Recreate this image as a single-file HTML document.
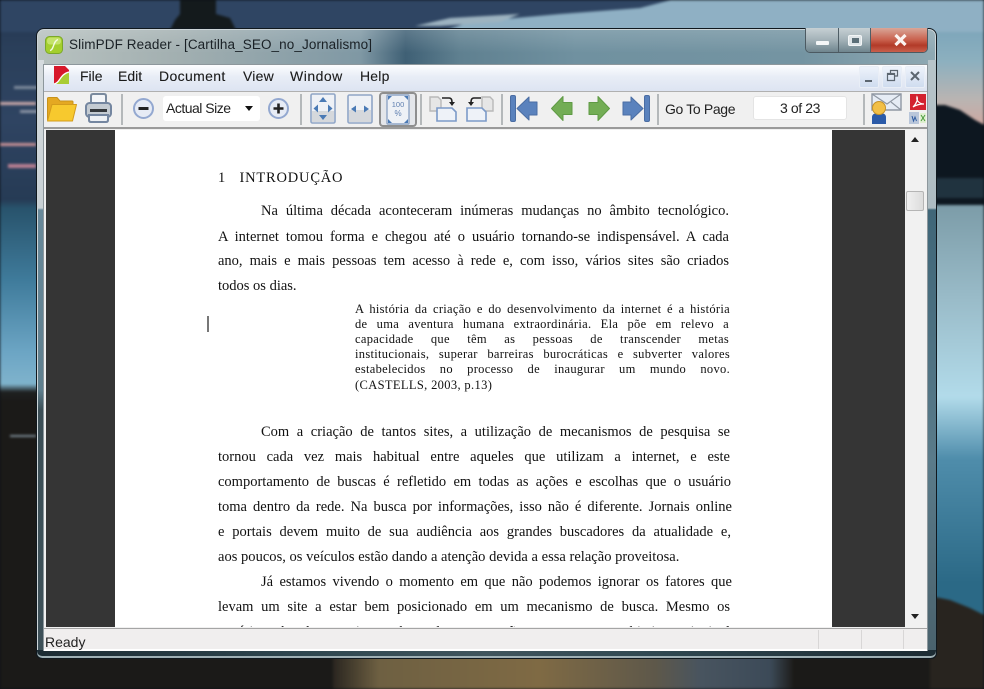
<!DOCTYPE html>
<html><head><meta charset="utf-8"><style>
html,body{margin:0;padding:0;width:984px;height:689px;overflow:hidden;background:#0c1118}
*{box-sizing:border-box}
.a{position:absolute}
#bg{position:absolute;left:0;top:0;filter:blur(1.2px)}
#win{position:absolute;left:36px;top:28px;width:901px;height:631px;border-radius:8px 8px 6px 6px;border:1px solid #10181e;
background:linear-gradient(rgba(255,255,255,.16),rgba(255,255,255,0) 24px),linear-gradient(90deg,#b8c2c0 0,#a3b0b1 15%,#7f98a4 36%,#3f6075 41%,#5f8090 47%,#7091a0 60%,#7494a2 85%,#8fa9b3 100%);box-shadow:inset 0 0 0 1px #cdd5d8}
#foot{position:absolute;left:36px;top:650px;width:901px;height:9px;border-radius:0 0 6px 6px;background:linear-gradient(90deg,#1c2b33,#2f4750 30%,#40555d 50%,#2f4750 70%,#1c2b33),#24333c;border:1px solid #10181e;border-top:0;box-shadow:inset 0 -2px 0 #9fb0b5}
#title{left:69px;top:37px;font:13.5px "Liberation Sans",sans-serif;color:#1a2126;letter-spacing:.1px;white-space:nowrap}
#client{left:43px;top:64px;width:885px;height:587px;background:#f0f0f0;overflow:hidden;border:1px solid #8d979c}
#menu{left:44px;top:65px;width:883px;height:26px;background:linear-gradient(#fcfdff,#e8edf6 45%,#dde4f2)}
.m{position:absolute;top:67px;font:14px/18px "Liberation Sans",sans-serif;color:#1a1a1a;white-space:nowrap;-webkit-text-stroke:.1px #222}
#tb{left:44px;top:91px;width:883px;height:38px;background:#f0f0f0;border-top:1px solid #b0b0b0;border-bottom:2px solid #9a9a9a}
.sep{position:absolute;top:94px;width:2px;height:31px;background:#b4b8ba}
#box1{left:163px;top:96px;width:97px;height:25px;background:#fff;border-radius:3px}
#box2{left:753px;top:96px;width:94px;height:24px;background:#fff;border:1px solid #e4e4e4;border-radius:3px;text-align:center;font:14px/23px "Liberation Sans",sans-serif;color:#222;letter-spacing:-.4px}
#as{left:166px;top:99px;font:14px/18px "Liberation Sans",sans-serif;color:#222;letter-spacing:-.5px;white-space:nowrap}
#gp{left:665px;top:100px;font:14px/18px "Liberation Sans",sans-serif;color:#222;letter-spacing:-.35px;white-space:nowrap}
#dark{left:46px;top:130px;width:859px;height:497px;background:#353535}
#page{left:115px;top:130px;width:717px;height:497px;background:#fff;overflow:hidden}
.l{position:absolute;font:14.5px/20px "Liberation Serif",serif;color:#111;white-space:nowrap;text-align:justify;text-align-last:justify;filter:blur(.25px)}
.q{font-size:12.5px;line-height:16px;letter-spacing:.3px}
#scroll{left:905px;top:130px;width:20px;height:497px;background:#f1f1f1}
#thumb{left:906px;top:191px;width:18px;height:20px;background:linear-gradient(90deg,#f0f0f0,#dcdcdc);border:1px solid #b5b5b5;border-radius:2px}
#sb{left:44px;top:628px;width:883px;height:23px;background:#f0eeee;border-top:1px solid #a5a5a5;border-bottom:2px solid #fff}
#ready{left:45px;top:633px;font:14px/18px "Liberation Sans",sans-serif;color:#222}
.sd{position:absolute;top:630px;width:1px;height:19px;background:#d8d6d6}
.wb{position:absolute;top:66px;width:20px;height:22px;background:linear-gradient(#eef3fb,#cfdcef);border:1px solid #e9eef6;border-radius:2px}
#ctl{left:805px;top:28px;width:123px;height:25px;border-radius:0 0 5px 5px;border:1px solid #4c5a62;border-top:0;overflow:hidden;display:flex}
#ctl div{height:100%}
</style></head><body>
<svg id="bg" width="984" height="689" viewBox="0 0 984 689">
<defs>
<linearGradient id="sky" gradientUnits="userSpaceOnUse" x1="0" y1="0" x2="0" y2="400"><stop offset="0" stop-color="#24344f"/><stop offset=".12" stop-color="#2a3f5a"/><stop offset=".3" stop-color="#2f4462"/><stop offset=".5" stop-color="#263b55"/><stop offset=".52" stop-color="#28536c"/><stop offset=".7" stop-color="#3f7b9b"/><stop offset=".88" stop-color="#6ca5c4"/><stop offset=".96" stop-color="#7fb3cc"/><stop offset=".98" stop-color="#1e2020"/><stop offset="1" stop-color="#1b1b1a"/></linearGradient>
<linearGradient id="skyr" gradientUnits="userSpaceOnUse" x1="0" y1="0" x2="0" y2="620"><stop offset="0" stop-color="#6f9db6"/><stop offset=".1" stop-color="#8db0bf"/><stop offset=".16" stop-color="#b9b4b2"/><stop offset=".2" stop-color="#cda9a2"/><stop offset=".29" stop-color="#24384a"/><stop offset=".32" stop-color="#7a9aa6"/><stop offset=".48" stop-color="#99bbc8"/><stop offset=".64" stop-color="#b2dbea"/><stop offset=".74" stop-color="#4f8dab"/><stop offset=".94" stop-color="#2b6986"/><stop offset="1" stop-color="#2b6986"/></linearGradient>
<linearGradient id="tan" x1="0" y1="0" x2="1" y2="0"><stop offset="0" stop-color="#2a2620"/><stop offset=".1" stop-color="#6e6042"/><stop offset=".45" stop-color="#7f6a44"/><stop offset=".7" stop-color="#5e584a"/><stop offset=".8" stop-color="#48545f"/><stop offset=".95" stop-color="#3c4a58"/><stop offset="1" stop-color="#1e1e1c"/></linearGradient>
</defs>
<rect width="984" height="689" fill="#1b1a18"/>
<rect x="-5" y="0" width="60" height="400" fill="url(#sky)"/>
<rect x="930" y="0" width="60" height="625" fill="url(#skyr)"/>
<rect x="0" y="0" width="984" height="32" fill="#8fb0c4"/>
<path d="M-5 -5H690L640 8 560 14 470 22 440 32H-5Z" fill="#2f4563"/>
<path d="M415 26L450 18 520 14 500 22 440 26Z" fill="#9db3c0"/>
<path d="M170 30L175 20 180 14V0H216V14L230 18 236 30Z" fill="#141a1c"/>
<path d="M930 105H945L960 110 975 120 990 128V205H930Z" fill="#0d1720"/>
<rect x="930" y="178" width="60" height="20" fill="#20333f"/>
<path d="M930 596L950 600 970 608 990 618V700H930Z" fill="#28241f"/>
<rect x="0" y="102" width="36" height="3" fill="#c9a8a8"/>
<rect x="14" y="86" width="24" height="3" fill="#7d8a9c"/>
<rect x="20" y="110" width="18" height="3" fill="#8a93a4"/>
<rect x="0" y="143" width="36" height="3" fill="#c58f94"/>
<rect x="8" y="164" width="28" height="4" fill="#b97f92"/>
<rect x="10" y="435" width="26" height="2" fill="#7a8790"/>
<rect x="333" y="655" width="460" height="40" fill="url(#tan)"/>
</svg>

<div id="win"></div>
<div id="foot"></div>
<div class="a" style="left:38px;top:60px;width:6px;height:590px;background:linear-gradient(#d5dbde 0,#c8d0d4 148px,#68899a 150px,#5f7f8e 330px,#3c4f57 350px,#3d5058 100%)"></div>
<div class="a" style="left:928px;top:60px;width:8px;height:590px;background:linear-gradient(#b7c4c9 0,#aebcc2 148px,#3f6678 150px,#5a7b8a 400px,#4a626d 100%)"></div>

<!-- app icon -->
<svg class="a" style="left:45px;top:36px" width="18" height="18" viewBox="0 0 18 18"><rect x=".5" y=".5" width="17" height="17" rx="4" fill="#a4cf2e" stroke="#7ba82a"/><rect x="2" y="1.5" width="14" height="7" rx="3" fill="#c4e36a"/><path d="M5 14.5C9 14 8 5 13 3.5" stroke="#f4fbe4" stroke-width="1.4" fill="none"/></svg>
<div id="title" class="a">SlimPDF Reader - [Cartilha_SEO_no_Jornalismo]</div>

<!-- caption buttons -->
<div id="ctl" class="a">
<div style="width:33px;background:linear-gradient(#c6d0d4,#a2b1b7 50%,#6f858e);border-right:1px solid #4f5e66"></div>
<div style="width:32px;background:linear-gradient(#c6d0d4,#a2b1b7 50%,#6f858e);border-right:1px solid #4f5e66"></div>
<div style="flex:1;background:linear-gradient(#d9a698,#c9604c 50%,#b23a28 72%,#c9604c)"></div>
</div>
<div class="a" style="left:816px;top:41px;width:13px;height:4px;background:#f4f6f7;border-radius:1px"></div>
<div class="a" style="left:848px;top:35px;width:14px;height:11px;background:#dfe5e8;border:1px solid #f2f5f6;border-radius:2px"></div>
<div class="a" style="left:852px;top:38px;width:7px;height:5px;background:#5c6f78"></div>
<svg class="a" style="left:893px;top:33px" width="15" height="14" viewBox="0 0 15 14"><path d="M2.5 2L12.5 12M12.5 2L2.5 12" stroke="#fbf3f0" stroke-width="3.2"/></svg>

<div id="client" class="a"></div>
<div id="menu" class="a"></div>
<svg class="a" style="left:53px;top:65px" width="17" height="20" viewBox="0 0 17 20"><path d="M1 1H12L16 5V19H1Z" fill="#d7182a"/><path d="M1 19C7 18 7 9 16 7V19Z" fill="#a9cc34"/><path d="M1 19C7 18 7 9 16 7" stroke="#fff" stroke-width="1.3" fill="none"/></svg>
<div class="m" style="left:80px">File</div>
<div class="m" style="left:118px">Edit</div>
<div class="m" style="left:159px;letter-spacing:.35px">Document</div>
<div class="m" style="left:243px;letter-spacing:.2px">View</div>
<div class="m" style="left:290px;letter-spacing:.5px">Window</div>
<div class="m" style="left:360px;letter-spacing:.2px">Help</div>
<div class="wb" style="left:859px"></div><div class="wb" style="left:882px"></div><div class="wb" style="left:905px"></div>
<div class="a" style="left:865px;top:80px;width:7px;height:2px;background:#5c6670"></div>
<svg class="a" style="left:885px;top:69px" width="15" height="14" viewBox="0 0 15 14"><path d="M5.5 4V1.5H12.5V7H10M2.5 4.5H9.5V11.5H2.5Z" stroke="#5c6670" stroke-width="1.2" fill="none"/><path d="M2.5 5.5H9.5" stroke="#5c6670"/></svg>
<svg class="a" style="left:908px;top:69px" width="14" height="14" viewBox="0 0 14 14"><path d="M3 3L11 11M11 3L3 11" stroke="#5c6670" stroke-width="2"/></svg>

<div id="tb" class="a"></div>
<!-- open folder -->
<svg class="a" style="left:46px;top:95px" width="32" height="28" viewBox="0 0 32 28"><path d="M1.500 25V3.500Q1.500 2.500 3 2.500H11L14 6H26Q27 6 27 7V12H8Z" fill="#e4a822" stroke="#c8921a"/><path d="M1.500 26L6 9.500H30.500L26.500 26Z" fill="#f7c92e" stroke="#d49c1c" stroke-linejoin="round"/></svg>
<!-- print -->
<svg class="a" style="left:84px;top:92px" width="29" height="32" viewBox="0 0 29 32"><path d="M7 12V4Q7 2 9 2H20Q22 2 22 4V12" fill="#f3f5f8" stroke="#7a8a9e" stroke-width="2"/><rect x="2" y="11" width="25" height="14" rx="3.500" fill="#c4cbd2" stroke="#7486a0" stroke-width="2"/><rect x="6" y="17" width="17" height="3" fill="#34383c"/><path d="M5 23H24V28Q24 30 22 30H7Q5 30 5 28Z" fill="#eef1f5" stroke="#7486a0" stroke-width="2"/></svg>
<div class="sep" style="left:121px"></div>
<svg class="a" style="left:132px;top:97px" width="23" height="23" viewBox="0 0 23 23"><circle cx="11.500" cy="11.500" r="9.500" fill="#e6ebf5" stroke="#93a8d0" stroke-width="2"/><rect x="6.500" y="10" width="10" height="3" fill="#222"/></svg>
<div id="box1" class="a"></div>
<div id="as" class="a">Actual Size</div>
<div class="a" style="left:245px;top:106px;border:4px solid transparent;border-top:5px solid #111;border-bottom:0"></div>
<svg class="a" style="left:267px;top:97px" width="23" height="23" viewBox="0 0 23 23"><circle cx="11.500" cy="11.500" r="9.500" fill="#e6ebf5" stroke="#93a8d0" stroke-width="2"/><path d="M6.500 11.500H16.500M11.500 6.500V16.500" stroke="#222" stroke-width="2.600"/></svg>
<div class="sep" style="left:300px"></div>
<!-- fit page -->
<svg class="a" style="left:310px;top:93px" width="26" height="32" viewBox="0 0 26 32"><rect x="1" y="1" width="24" height="29" rx="1.500" fill="#eef1f6" stroke="#8fa5c6" stroke-width="1.600"/><path d="M2 18H24V29H2Z" fill="#d5d8dc"/><path d="M13 4L17 9H9ZM13 27L17 22H9ZM3.500 15.500L8 11.500V19.500ZM22.500 15.500L18 11.500V19.500Z" fill="#4a7ab5"/></svg>
<!-- fit width -->
<svg class="a" style="left:347px;top:94px" width="26" height="30" viewBox="0 0 26 30"><rect x="1" y="1" width="24" height="28" rx="1.500" fill="#eef1f6" stroke="#8fa5c6" stroke-width="1.600"/><path d="M2 16H24V28H2Z" fill="#d5d8dc"/><path d="M4 15L9 11.500V18.500ZM22 15L17 11.500V18.500Z" fill="#4a7ab5"/></svg>
<!-- 100% -->
<div class="a" style="left:379px;top:92px;width:38px;height:35px;border:2px solid #8e8e8e;border-radius:4px;background:#e4e6ea"></div>
<svg class="a" style="left:386px;top:94px" width="24" height="31" viewBox="0 0 24 31"><rect x="1" y="1" width="22" height="29" rx="1" fill="#eef1f6" stroke="#8fa5c6" stroke-width="1.400"/><path d="M2 6L6 2H2ZM22 6L18 2H22ZM2 25L6 29H2ZM22 25L18 29H22Z" fill="#4a7ab5"/><text x="12" y="13" text-anchor="middle" font-family="Liberation Sans" font-size="7.500" fill="#5f7fb0">100</text><text x="12" y="22" text-anchor="middle" font-family="Liberation Sans" font-size="8" fill="#5f7fb0">%</text></svg>
<div class="sep" style="left:420px"></div>
<!-- rotate -->
<svg class="a" style="left:428px;top:94px" width="30" height="29" viewBox="0 0 30 29"><path d="M2 3H10L13 6V17H2Z" fill="#e6e6e6" stroke="#b8b8b8" stroke-width="1.400"/><path d="M9 14H24L28 18V27H9Z" fill="#eef2f8" stroke="#7c9ac8" stroke-width="1.600"/><path d="M14 4H21C24 4 24 7 24 9" stroke="#222" stroke-width="1.600" fill="none"/><path d="M21 8H27L24 12Z" fill="#222"/></svg>
<svg class="a" style="left:465px;top:94px" width="30" height="29" viewBox="0 0 30 29"><path d="M17 3H25L28 6V17H17Z" fill="#e6e6e6" stroke="#b8b8b8" stroke-width="1.400"/><path d="M2 14H17L21 18V27H2Z" fill="#eef2f8" stroke="#7c9ac8" stroke-width="1.600"/><path d="M16 4H9C6 4 6 7 6 9" stroke="#222" stroke-width="1.600" fill="none"/><path d="M3 8H9L6 12Z" fill="#222"/></svg>
<div class="sep" style="left:501px"></div>
<!-- nav -->
<svg class="a" style="left:509px;top:94px" width="30" height="29" viewBox="0 0 30 29"><rect x="1.500" y="1.500" width="5" height="26" rx="1.500" fill="#5a82bd" stroke="#4a6da3"/><path d="M8 14.500L20 3V8H28V21H20V26Z" fill="#5a82bd" stroke="#4a6da3" stroke-linejoin="round"/></svg>
<svg class="a" style="left:550px;top:95px" width="24" height="27" viewBox="0 0 24 27"><path d="M1.500 13.500L13 1.500V7.500H22V19.500H13V25.500Z" fill="#73ad55" stroke="#5f9a45" stroke-linejoin="round"/></svg>
<svg class="a" style="left:587px;top:95px" width="24" height="27" viewBox="0 0 24 27"><path d="M22.500 13.500L11 1.500V7.500H2V19.500H11V25.500Z" fill="#73ad55" stroke="#5f9a45" stroke-linejoin="round"/></svg>
<svg class="a" style="left:621px;top:94px" width="30" height="29" viewBox="0 0 30 29"><rect x="23.500" y="1.500" width="5" height="26" rx="1.500" fill="#5a82bd" stroke="#4a6da3"/><path d="M22 14.500L10 3V8H2V21H10V26Z" fill="#5a82bd" stroke="#4a6da3" stroke-linejoin="round"/></svg>
<div class="sep" style="left:657px"></div>
<div id="gp" class="a">Go To Page</div>
<div id="box2" class="a">3 of 23</div>
<div class="sep" style="left:863px"></div>
<!-- mail -->
<svg class="a" style="left:871px;top:93px" width="32" height="31" viewBox="0 0 32 31"><path d="M1 1H30V17H1Z" fill="#e6ecf5" stroke="#8f97a3" stroke-width="1.400"/><path d="M1 1L16 11L30 1M30 17L20 9" stroke="#8f97a3" stroke-width="1.200" fill="none"/><path d="M1 31V24C1 21 4 20 8 20C12 20 15 21 15 24V31Z" fill="#2a5aa8"/><circle cx="8" cy="15" r="6.500" fill="#f2bf46" stroke="#c4922a"/></svg>
<!-- pdf -->
<svg class="a" style="left:909px;top:93px" width="17" height="31" viewBox="0 0 17 31"><rect x="1" y="1" width="16" height="16" fill="#d3222e"/><path d="M4 14C8 10 9 6 8 4C7 7 10 11 15 11C11 11 7 12 4 14Z" fill="none" stroke="#fff" stroke-width="1.200"/><rect x="0" y="19" width="10" height="12" fill="#b9c6da"/><path d="M3 23L4.500 28L6 24L7.500 28" stroke="#2d5aa0" fill="none"/><rect x="11" y="20" width="6" height="10" fill="#dff0d0"/><path d="M12 22L16 28M16 22L12 28" stroke="#4a9a3c"/></svg>

<div id="dark" class="a"></div>
<div id="page" class="a">
<div class="l" style="left:103px;top:38px;text-align-last:left;word-spacing:9px;letter-spacing:.8px">1 INTRODUÇÃO</div>
<div class="l" style="left:146px;top:71px;width:468px">Na última década aconteceram inúmeras mudanças no âmbito tecnológico.</div>
<div class="l" style="left:103px;top:97px;width:511px">A internet tomou forma e chegou até o usuário tornando-se indispensável. A cada</div>
<div class="l" style="left:103px;top:121px;width:511px">ano, mais e mais pessoas tem acesso à rede e, com isso, vários sites são criados</div>
<div class="l" style="left:103px;top:146px;text-align-last:left">todos os dias.</div>
<div class="l q" style="left:240px;top:171px;width:375px">A história da criação e do desenvolvimento da internet é a história</div>
<div class="l q" style="left:240px;top:186px;width:374px">de uma aventura humana extraordinária. Ela põe em relevo a</div>
<div class="l q" style="left:240px;top:201px;width:374px">capacidade que têm as pessoas de transcender metas</div>
<div class="l q" style="left:240px;top:216px;width:375px">institucionais, superar barreiras burocráticas e subverter valores</div>
<div class="l q" style="left:240px;top:231px;width:375px">estabelecidos no processo de inaugurar um mundo novo.</div>
<div class="l q" style="left:240px;top:247px;text-align-last:left;letter-spacing:.35px">(CASTELLS, 2003, p.13)</div>
<div class="l" style="left:146px;top:292px;width:469px">Com a criação de tantos sites, a utilização de mecanismos de pesquisa se</div>
<div class="l" style="left:103px;top:317px;width:512px">tornou cada vez mais habitual entre aqueles que utilizam a internet, e este</div>
<div class="l" style="left:103px;top:342px;width:513px">comportamento de buscas é refletido em todas as ações e escolhas que o usuário</div>
<div class="l" style="left:103px;top:367px;width:514px">toma dentro da rede. Na busca por informações, isso não é diferente. Jornais online</div>
<div class="l" style="left:103px;top:392px;width:513px">e portais devem muito de sua audiência aos grandes buscadores da atualidade e,</div>
<div class="l" style="left:103px;top:417px;text-align-last:left;letter-spacing:.02px">aos poucos, os veículos estão dando a atenção devida a essa relação proveitosa.</div>
<div class="l" style="left:146px;top:442px;width:471px">Já estamos vivendo o momento em que não podemos ignorar os fatores que</div>
<div class="l" style="left:103px;top:467px;width:512px">levam um site a estar bem posicionado em um mecanismo de busca. Mesmo os</div>
<div class="l" style="left:103px;top:492px;width:512px">usuários abandonam sites e buscadores que não cumprem seu objetivo principal</div>
</div>
<div class="a" style="left:207px;top:316px;width:2px;height:16px;background:#777"></div>
<div id="scroll" class="a"></div>
<div class="a" style="left:911px;top:137px;border:4px solid transparent;border-bottom:5px solid #222;border-top:0"></div>
<div id="thumb" class="a"></div>
<div class="a" style="left:911px;top:614px;border:4px solid transparent;border-top:5px solid #222;border-bottom:0"></div>
<div id="sb" class="a"></div>
<div id="ready" class="a">Ready</div>
<div class="sd" style="left:818px"></div><div class="sd" style="left:861px"></div><div class="sd" style="left:903px"></div>
</body></html>
